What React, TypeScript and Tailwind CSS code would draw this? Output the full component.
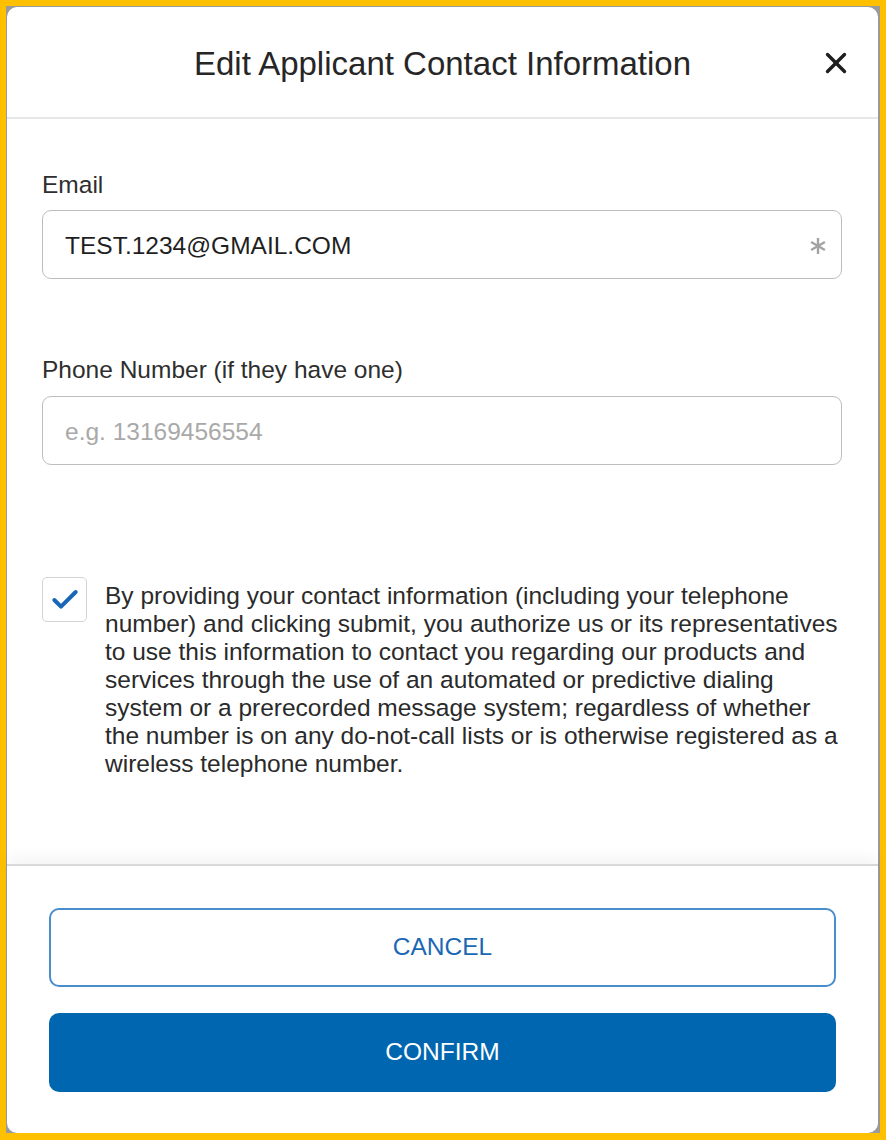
import { Check } from 'lucide-react'

function Asterisk() {
  return (
    <svg width="18" height="18" viewBox="0 0 18 18" className="text-[#a3a3a3]">
      <g stroke="currentColor" strokeWidth="2.4" strokeLinecap="butt">
        <line x1="9" y1="1" x2="9" y2="17" />
        <line x1="2.1" y1="5" x2="15.9" y2="13" />
        <line x1="2.1" y1="13" x2="15.9" y2="5" />
      </g>
    </svg>
  )
}

export default function App() {
  return (
    <div className="w-[886px] h-[1140px] border-[#ffc000] border-l-[6px] border-t-[6px] border-r-[6px] border-b-[7px] bg-[#9a9a9a] font-['Liberation_Sans',Arial,sans-serif] text-[#333]">
      <div className="ml-px mr-[2px] mt-px h-[1126px] bg-white rounded-[10px] flex flex-col">
        {/* Header */}
        <div className="relative h-[112px] shrink-0 flex items-center justify-center border-b-2 border-[#e6e7e9]">
          <h1 className="text-[33px] leading-none text-[#262626] pt-[2px]">Edit Applicant Contact Information</h1>
          <button className="absolute right-[31px] top-[45px] text-[#1f1f1f]">
            <svg width="22" height="22" viewBox="0 0 22 22">
              <g stroke="currentColor" strokeWidth="3.4" strokeLinecap="round">
                <line x1="2.5" y1="2.5" x2="19.5" y2="19.5" />
                <line x1="19.5" y1="2.5" x2="2.5" y2="19.5" />
              </g>
            </svg>
          </button>
        </div>

        {/* Body */}
        <div className="flex-1 pl-[35px] pr-[36px] pt-[52px]">
          <label className="block text-[24.5px] leading-[28px] text-[#2e2e2e]">Email</label>
          <div className="mt-[11px] h-[69px] rounded-[9px] border-[1.5px] border-[#bdbdbd] flex items-center justify-between pl-[22px] pr-[14px]">
            <span className="text-[24.5px] text-[#1f1f1f] pt-[3px]">TEST.1234@GMAIL.COM</span>
            <span className="pt-[3px]">
              <Asterisk />
            </span>
          </div>

          <label className="block mt-[77px] text-[24.5px] leading-[28px] text-[#2e2e2e]">Phone Number (if they have one)</label>
          <div className="mt-[12px] h-[69px] rounded-[9px] border-[1.5px] border-[#bdbdbd] flex items-center pl-[22px]">
            <span className="text-[24.5px] text-[#a9a9a9] pt-[3px]">e.g. 13169456554</span>
          </div>

          <div className="mt-[112px] flex items-start gap-[18px]">
            <div className="w-[45px] h-[45px] shrink-0 rounded-[5px] border-[1.5px] border-[#d3d3d3] flex items-center justify-center text-[#1766b8]">
              <Check className="w-[32px] h-[32px]" strokeWidth={3} />
            </div>
            <p className="mt-[5px] w-[740px] text-[24.5px] leading-[28px] text-[#2a2a2a]">
              By providing your contact information (including your telephone number) and clicking submit, you authorize us or its representatives to use this information to contact you regarding our products and services through the use of an automated or predictive dialing system or a prerecorded message system; regardless of whether the number is on any do-not-call lists or is otherwise registered as a wireless telephone number.
            </p>
          </div>
        </div>

        {/* Footer */}
        <div className="shrink-0 border-t-2 border-[#d9d9d9] shadow-[0_-8px_12px_rgba(0,0,0,0.04)] px-[42px] pt-[42px] pb-[41px] flex flex-col gap-[26px]">
          <button className="h-[79px] rounded-[10px] border-2 border-[#4a8dcc] text-[#1a68b3] text-[24.5px]">CANCEL</button>
          <button className="h-[79px] rounded-[10px] bg-[#0066b0] text-white text-[24.5px]">CONFIRM</button>
        </div>
      </div>
    </div>
  )
}
